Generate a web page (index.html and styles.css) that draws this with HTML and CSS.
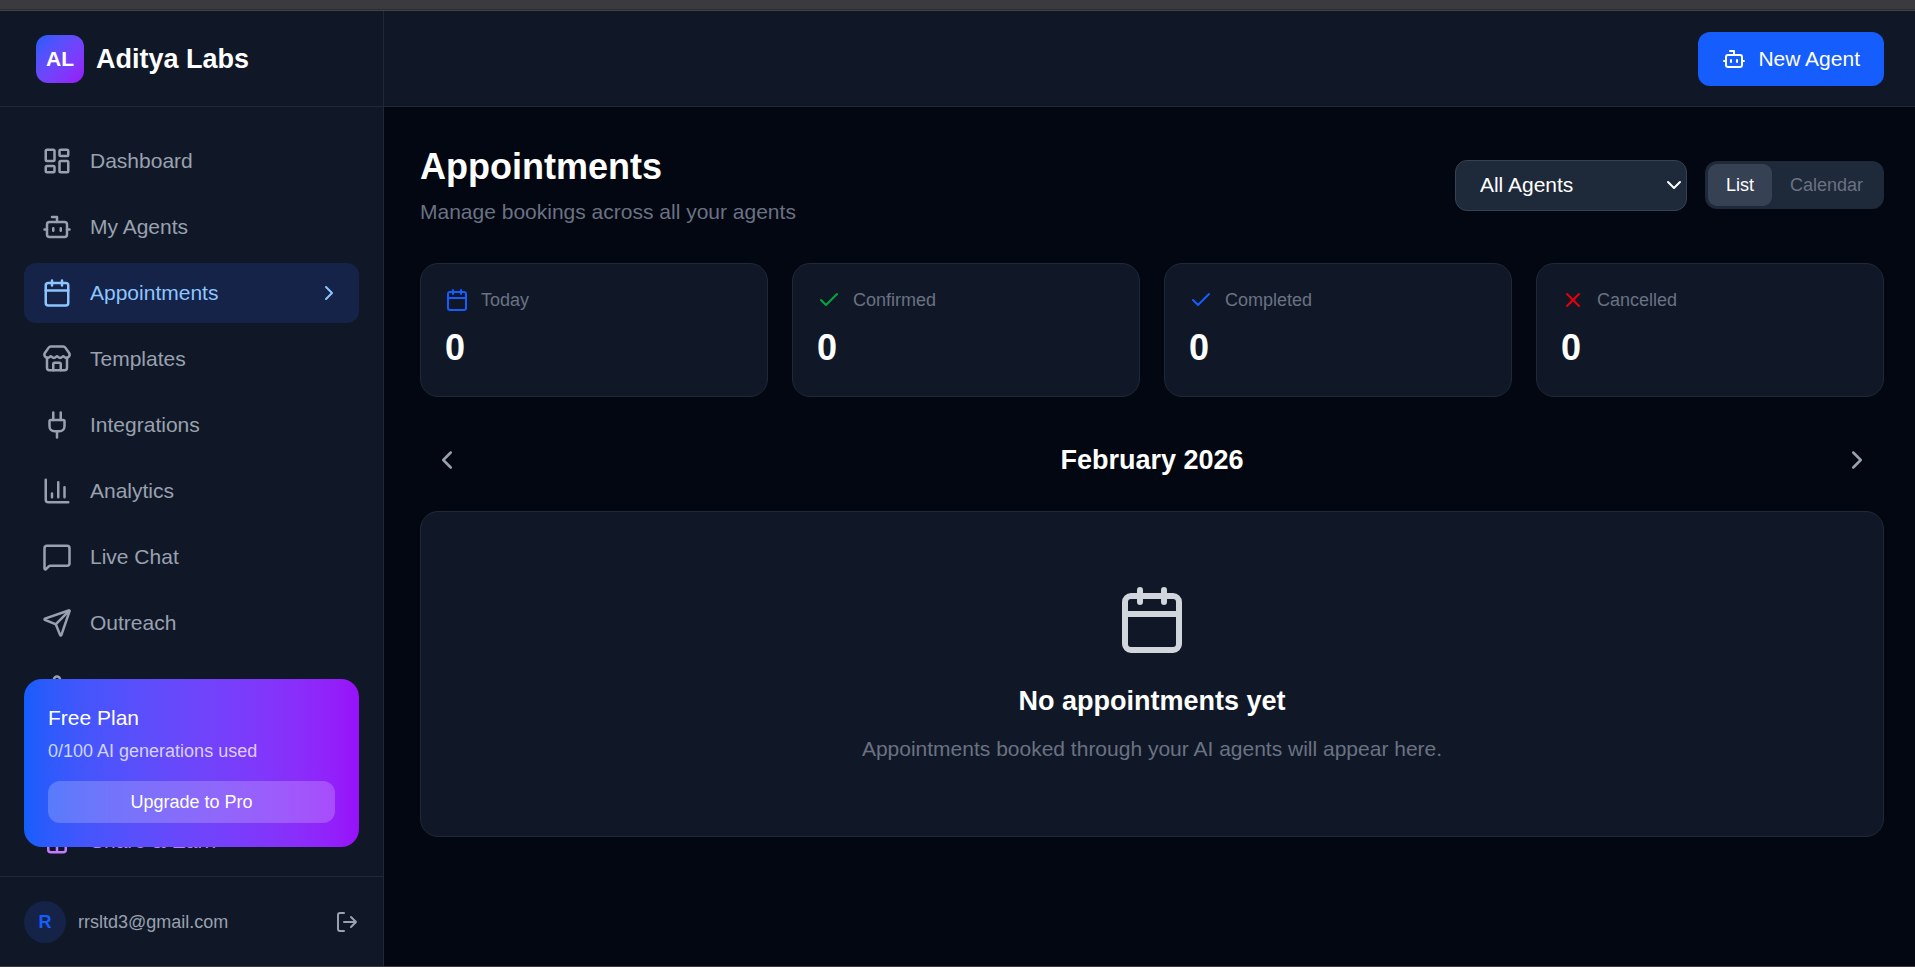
FILE: index.html
```html
<!DOCTYPE html>
<html lang="en">
<head>
<meta charset="utf-8">
<title>Appointments</title>
<link rel="stylesheet" href="styles.css">
</head>
<body>
<svg class="sprite" aria-hidden="true">
  <symbol id="dashboard" viewBox="0 0 24 24"><rect width="7" height="9" x="3" y="3" rx="1"/><rect width="7" height="5" x="14" y="3" rx="1"/><rect width="7" height="9" x="14" y="12" rx="1"/><rect width="7" height="5" x="3" y="16" rx="1"/></symbol>
  <symbol id="bot" viewBox="0 0 24 24"><path d="M12 8V4H8"/><rect width="16" height="12" x="4" y="8" rx="2"/><path d="M2 14h2M20 14h2M15 13v2M9 13v2"/></symbol>
  <symbol id="calendar" viewBox="0 0 24 24"><path d="M8 2v4M16 2v4"/><rect width="18" height="18" x="3" y="4" rx="2"/><path d="M3 10h18"/></symbol>
  <symbol id="store" viewBox="0 0 24 24"><path d="M15 21v-5a1 1 0 0 0-1-1h-4a1 1 0 0 0-1 1v5"/><path d="M17.774 10.31a1.12 1.12 0 0 0-1.549 0 2.5 2.5 0 0 1-3.451 0 1.12 1.12 0 0 0-1.548 0 2.5 2.5 0 0 1-3.452 0 1.12 1.12 0 0 0-1.549 0 2.5 2.5 0 0 1-3.77-3.248l2.889-4.184A2 2 0 0 1 7 2h10a2 2 0 0 1 1.653.873l2.895 4.192a2.5 2.5 0 0 1-3.774 3.244"/><path d="M4 10.95V19a2 2 0 0 0 2 2h12a2 2 0 0 0 2-2v-8.05"/></symbol>
  <symbol id="plug" viewBox="0 0 24 24"><path d="M12 22v-5M15 8V2M9 8V2"/><path d="M17 8a1 1 0 0 1 1 1v4a4 4 0 0 1-4 4h-4a4 4 0 0 1-4-4V9a1 1 0 0 1 1-1z"/></symbol>
  <symbol id="chart" viewBox="0 0 24 24"><path d="M3 3v16a2 2 0 0 0 2 2h16M18 17V9M13 17V5M8 17v-3"/></symbol>
  <symbol id="message" viewBox="0 0 24 24"><path d="M22 17a2 2 0 0 1-2 2H6.828a2 2 0 0 0-1.414.586l-2.202 2.202A.71.71 0 0 1 2 21.286V5a2 2 0 0 1 2-2h16a2 2 0 0 1 2 2z"/></symbol>
  <symbol id="send" viewBox="0 0 24 24"><path d="M14.536 21.686a.5.5 0 0 0 .937-.024l6.5-19a.496.496 0 0 0-.635-.635l-19 6.5a.5.5 0 0 0-.024.937l7.93 3.18a2 2 0 0 1 1.112 1.11z"/><path d="m21.854 2.147-10.94 10.939"/></symbol>
  <symbol id="waypoints" viewBox="0 0 24 24"><circle cx="12" cy="4.5" r="2.5"/><path d="m10.2 6.3-3.9 3.9"/><circle cx="4.5" cy="12" r="2.5"/><path d="M7 12h10"/><circle cx="19.5" cy="12" r="2.5"/><path d="m13.8 17.7 3.9-3.9"/><circle cx="12" cy="19.5" r="2.5"/></symbol>
  <symbol id="gift" viewBox="0 0 24 24"><rect x="3" y="8" width="18" height="4" rx="1"/><path d="M12 8v13M19 12v7a2 2 0 0 1-2 2H7a2 2 0 0 1-2-2v-7"/><path d="M7.5 8a2.5 2.5 0 0 1 0-5A4.8 8 0 0 1 12 8a4.8 8 0 0 1 4.5-5 2.5 2.5 0 0 1 0 5"/></symbol>
  <symbol id="logout" viewBox="0 0 24 24"><path d="m16 17 5-5-5-5M21 12H9M9 21H5a2 2 0 0 1-2-2V5a2 2 0 0 1 2-2h4"/></symbol>
  <symbol id="right" viewBox="0 0 24 24"><path d="m9 18 6-6-6-6"/></symbol>
  <symbol id="left" viewBox="0 0 24 24"><path d="m15 18-6-6 6-6"/></symbol>
  <symbol id="down" viewBox="0 0 24 24"><path d="m6 9 6 6 6-6"/></symbol>
  <symbol id="check" viewBox="0 0 24 24"><path d="M20 6 9 17l-5-5"/></symbol>
  <symbol id="cross" viewBox="0 0 24 24"><path d="M18 6 6 18M6 6l12 12"/></symbol>
</svg>
<div class="window-edge"></div>
<div class="app">
  <aside class="sidebar">
    <div class="brand"><span class="brand-mark">AL</span><span class="brand-name">Aditya Labs</span></div>
    <nav class="nav" aria-label="Main">
      <a class="nav-item" href="#"><svg class="icon icon-lg"><use href="#dashboard"/></svg>Dashboard</a>
      <a class="nav-item" href="#"><svg class="icon icon-lg"><use href="#bot"/></svg>My Agents</a>
      <a class="nav-item nav-item-active" href="#" aria-current="page"><svg class="icon icon-lg"><use href="#calendar"/></svg>Appointments<svg class="icon nav-chevron"><use href="#right"/></svg></a>
      <a class="nav-item" href="#"><svg class="icon icon-lg"><use href="#store"/></svg>Templates</a>
      <a class="nav-item" href="#"><svg class="icon icon-lg"><use href="#plug"/></svg>Integrations</a>
      <a class="nav-item" href="#"><svg class="icon icon-lg"><use href="#chart"/></svg>Analytics</a>
      <a class="nav-item" href="#"><svg class="icon icon-lg"><use href="#message"/></svg>Live Chat</a>
      <a class="nav-item" href="#"><svg class="icon icon-lg"><use href="#send"/></svg>Outreach</a>
      <a class="nav-item" href="#" aria-label="More"><svg class="icon icon-lg"><use href="#waypoints"/></svg></a>
      <a class="nav-item nav-item-share" href="#"><svg class="icon icon-lg"><use href="#gift"/></svg>Share &amp; Earn</a>
    </nav>
    <section class="plan">
      <p class="plan-name">Free Plan</p>
      <p class="plan-usage">0/100 AI generations used</p>
      <button class="plan-button" type="button">Upgrade to Pro</button>
    </section>
    <div class="account">
      <span class="avatar">R</span>
      <span class="email">rrsltd3@gmail.com</span>
      <button class="icon-button" type="button" aria-label="Log out"><svg class="icon"><use href="#logout"/></svg></button>
    </div>
  </aside>
  <div class="content">
    <header class="topbar">
      <button class="new-agent" type="button"><svg class="icon"><use href="#bot"/></svg>New Agent</button>
    </header>
    <main class="main">
      <div class="page-head">
        <div>
          <h1 class="title">Appointments</h1>
          <p class="subtitle">Manage bookings across all your agents</p>
        </div>
        <div class="filters">
          <div class="select-wrap">
            <select class="select" aria-label="Agent"><option>All Agents</option></select>
            <svg class="icon select-arrow"><use href="#down"/></svg>
          </div>
          <div class="toggle">
            <button class="toggle-button toggle-button-on" type="button" aria-pressed="true">List</button>
            <button class="toggle-button" type="button" aria-pressed="false">Calendar</button>
          </div>
        </div>
      </div>
      <div class="stats">
        <div class="card stat"><div class="stat-label"><svg class="icon blue"><use href="#calendar"/></svg>Today</div><div class="stat-value">0</div></div>
        <div class="card stat"><div class="stat-label"><svg class="icon green"><use href="#check"/></svg>Confirmed</div><div class="stat-value">0</div></div>
        <div class="card stat"><div class="stat-label"><svg class="icon blue"><use href="#check"/></svg>Completed</div><div class="stat-value">0</div></div>
        <div class="card stat"><div class="stat-label"><svg class="icon red"><use href="#cross"/></svg>Cancelled</div><div class="stat-value">0</div></div>
      </div>
      <div class="month">
        <button class="icon-button month-button" type="button" aria-label="Previous month"><svg class="icon icon-lg"><use href="#left"/></svg></button>
        <h2 class="heading">February 2026</h2>
        <button class="icon-button month-button" type="button" aria-label="Next month"><svg class="icon icon-lg"><use href="#right"/></svg></button>
      </div>
      <section class="card empty">
        <svg class="icon icon-xl"><use href="#calendar"/></svg>
        <h3 class="heading empty-heading">No appointments yet</h3>
        <p class="empty-text">Appointments booked through your AI agents will appear here.</p>
      </section>
    </main>
  </div>
</div>
</body>
</html>
```
FILE: styles.css
```css
* { box-sizing: border-box; }

body {
  margin: 0;
  height: 100vh;
  display: flex;
  flex-direction: column;
  overflow: hidden;
  background: #030712;
  color: #fff;
  font: 21px/30px "Liberation Sans", Arial, sans-serif;
  border-bottom: 1px solid #3b3a3f;
}

h1, h2, h3, p { margin: 0; }

button, select {
  font: inherit;
  color: inherit;
  border: 0;
  background: none;
  padding: 0;
  cursor: pointer;
}

.sprite { position: absolute; width: 0; height: 0; }

.icon {
  width: 24px;
  height: 24px;
  flex: none;
  fill: none;
  stroke: currentColor;
  stroke-width: 2;
  stroke-linecap: round;
  stroke-linejoin: round;
}
.icon-lg { width: 30px; height: 30px; }
.icon-xl { width: 72px; height: 72px; color: #d1d5dc; }
.blue { color: #155dfc; }
.green { color: #00a63e; }
.red { color: #e7000b; }

.window-edge {
  flex: none;
  height: 11px;
  background: #3b3a3f;
  border-bottom: 1px solid #434246;
  box-shadow: inset 0 -1px #2d2c30;
}

.app { flex: 1; min-height: 0; display: flex; }

.sidebar {
  position: relative;
  width: 384px;
  flex: none;
  display: flex;
  flex-direction: column;
  background: #101828;
  border-right: 1px solid #1e2939;
}

.brand {
  flex: none;
  height: 96px;
  padding: 0 36px;
  display: flex;
  align-items: center;
  gap: 12px;
  border-bottom: 1px solid #1e2939;
}
.brand-mark {
  width: 48px;
  height: 48px;
  display: grid;
  place-items: center;
  border-radius: 12px;
  background: linear-gradient(to bottom right in oklab, #155dfc, #9810fa);
  font-weight: 700;
}
.brand-name { font-size: 27px; font-weight: 700; }

.nav {
  flex: 1;
  min-height: 0;
  overflow: hidden;
  padding: 24px;
  display: flex;
  flex-direction: column;
  gap: 6px;
}
.nav-item {
  flex: none;
  display: flex;
  align-items: center;
  gap: 18px;
  padding: 15px 18px;
  border-radius: 12px;
  color: #99a1af;
  text-decoration: none;
}
.nav-item-active { background: #142347; color: #8ec5ff; }
.nav-chevron { margin-left: auto; }
.nav-item-share { margin-top: 86px; color: #c27aff; }

.plan {
  position: absolute;
  left: 24px;
  right: 24px;
  bottom: 119px;
  padding: 24px;
  border-radius: 18px;
  background: linear-gradient(to right in oklab, #155dfc, #9810fa);
}
.plan-usage {
  margin: 6px 0 18px;
  font-size: 18px;
  line-height: 24px;
  color: rgba(255, 255, 255, 0.75);
}
.plan-button {
  display: block;
  width: 100%;
  padding: 9px;
  border-radius: 12px;
  background: rgba(255, 255, 255, 0.2);
  font-size: 18px;
  line-height: 24px;
}

.account {
  flex: none;
  padding: 24px 24px 23px;
  display: flex;
  align-items: center;
  gap: 12px;
  border-top: 1px solid #1e2939;
  color: #99a1af;
  font-size: 18px;
}
.avatar {
  width: 42px;
  height: 42px;
  display: grid;
  place-items: center;
  border-radius: 50%;
  background: #142347;
  color: #155dfc;
  font-weight: 700;
}
.email { flex: 1; }
.icon-button { display: flex; color: #99a1af; }

.content { flex: 1; min-width: 0; display: flex; flex-direction: column; }

.topbar {
  flex: none;
  height: 96px;
  padding: 0 31px 0 36px;
  display: flex;
  align-items: center;
  justify-content: flex-end;
  background: #101828;
  border-bottom: 1px solid #1e2939;
}
.new-agent {
  display: flex;
  align-items: center;
  gap: 12px;
  padding: 12px 24px;
  border-radius: 12px;
  background: #155dfc;
}

.main { flex: 1; padding: 36px 31px 36px 36px; }

.page-head { display: flex; align-items: center; justify-content: space-between; }
.title { font-size: 36px; line-height: 48px; }
.subtitle { margin-top: 6px; color: #6a7282; }

.filters { display: flex; align-items: center; gap: 18px; }
.select-wrap { position: relative; }
.select {
  appearance: none;
  display: block;
  width: 232px;
  height: 51px;
  padding: 0 24px;
  border: 1px solid #364153;
  border-radius: 12px;
  background: #1e2939;
}
.select-arrow {
  position: absolute;
  right: 1px;
  top: 13px;
  pointer-events: none;
}

.toggle { display: flex; padding: 3px; border-radius: 12px; background: #1e2939; }
.toggle-button {
  padding: 9px 18px;
  border-radius: 9px;
  color: #6a7282;
  font-size: 18px;
  line-height: 24px;
}
.toggle-button-on { background: #364153; color: #fff; }

.card { background: #101828; border: 1px solid #1e2939; border-radius: 18px; }

.stats {
  margin-top: 36px;
  display: grid;
  grid-template-columns: repeat(4, 1fr);
  gap: 24px;
}
.stat { padding: 24px; }
.stat-label {
  display: flex;
  align-items: center;
  gap: 12px;
  color: #6a7282;
  font-size: 18px;
  line-height: 24px;
}
.stat-value { margin-top: 12px; font-size: 36px; line-height: 48px; font-weight: 700; }

.month {
  margin: 36px 0 24px;
  display: flex;
  align-items: center;
  justify-content: space-between;
}
.month-button { padding: 12px; }
.heading { font-size: 27px; line-height: 42px; }

.empty {
  padding: 72px 24px;
  display: flex;
  flex-direction: column;
  align-items: center;
}
.empty-heading { margin: 24px 0 12px; }
.empty-text { color: #6a7282; }
```
